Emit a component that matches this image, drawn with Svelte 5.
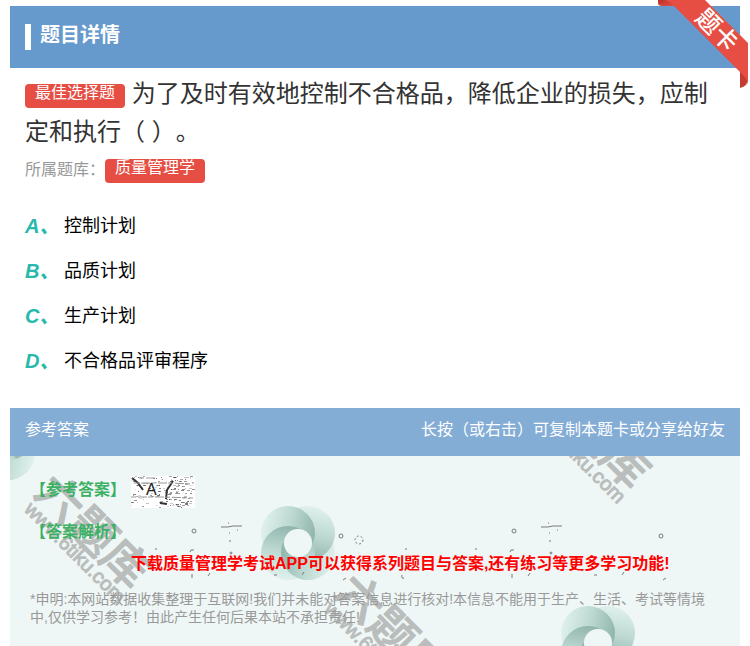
<script lang="ts">
	const options = [
		{ key: 'A', text: '控制计划' },
		{ key: 'B', text: '品质计划' },
		{ key: 'C', text: '生产计划' },
		{ key: 'D', text: '不合格品评审程序' },
	];

	// watermark tiles, offsets inside the answer panel
	const marks = [
		{ x: 0, y: 0 },
		{ x: 300, y: 100 },
		{ x: 500, y: -100 },
	];
	const swirls = [
		{ x: -12, y: -13 },
		{ x: 288, y: 87 },
		{ x: 588, y: 187 },
	];

	// speckles behind the answer letter
	let seed = 7;
	function rand() {
		seed = (seed * 16807) % 2147483647;
		return seed / 2147483647;
	}
	const specks = Array.from({ length: 170 }, () => ({
		x: Math.floor(rand() * 62),
		y: Math.floor(rand() * 32),
		w: 1 + Math.floor(rand() * 3),
		o: 0.1 + rand() * 0.45,
	}));
</script>

<main class="page">
	<header class="head">
		<h1>题目详情</h1>
	</header>
	<svg class="ribbon" width="92" height="90" viewBox="0 0 92 90">
		<defs>
			<linearGradient id="fold" x1="0" y1="0" x2="1" y2="1">
				<stop offset="0" stop-color="#b93228" />
				<stop offset="1" stop-color="#e64e44" />
			</linearGradient>
		</defs>
		<path d="M2 0V3Q2 6 6 6H20L12 0Z" fill="url(#fold)" />
		<path d="M84 70V88Q92 86 92 79V70Z" fill="#c43c32" />
		<path d="M7 0H49L92 43V85Q92 80 86 74L17 5Q12 0 7 0Z" fill="#e64e44" />
		<text x="61" y="30" transform="rotate(45 61 30)" text-anchor="middle" dominant-baseline="central">题卡</text>
	</svg>

	<section class="question">
		<h2><span class="badge">最佳选择题</span> 为了及时有效地控制不合格品，降低企业的损失，应制定和执行（ ）。</h2>
		<p class="bank">所属题库：<a class="badge" href="#bank">质量管理学</a></p>
		<ul>
			{#each options as opt}
				<li><em>{opt.key}、</em><span>{opt.text}</span></li>
			{/each}
		</ul>
	</section>

	<div class="bar">
		<span>参考答案</span>
		<span>长按（或右击）可复制本题卡或分享给好友</span>
	</div>

	<section class="answer">
		<svg class="backdrop" aria-hidden="true">
			<defs>
				<linearGradient id="shade" x1="0" y1="0.4" x2="1" y2="0.6">
					<stop offset="0" stop-color="#e0f1ed" />
					<stop offset="0.5" stop-color="#bdd9d2" />
					<stop offset="1" stop-color="#8fb4ab" />
				</linearGradient>
				<clipPath id="under">
					<path d="M-40 0H0V15Q10 18 18 15V40H-40Z" />
				</clipPath>
				<circle id="petal" cx="-10" cy="-10" r="27" fill="url(#shade)" />
				<g id="swirl">
					<use href="#petal" transform="rotate(180)" />
					<use href="#petal" transform="rotate(90)" />
					<use href="#petal" />
					<use href="#petal" transform="rotate(270)" />
					<g clip-path="url(#under)">
						<use href="#petal" transform="rotate(180)" />
					</g>
					<circle r="14" fill="#eff7f6" />
				</g>
				<pattern id="dust" width="320" height="130" patternUnits="userSpaceOnUse">
					<path d="M211 71h7l5-1h9M218 67h1M219 77h1M227 74h1M220 84v2M145 93h2M75 93h2M200 117l-2 3M264 119h3M294 116l-2 3M13 124l3-2M74 122q-3 1-2-3M182 118v4M184 94q-4-1-4 2" />
					<circle cx="184" cy="75" r="2" />
					<circle cx="221" cy="97" r="1" />
					<circle cx="11" cy="80" r="2" />
					<circle cx="29" cy="84" r="4" stroke-dasharray="2 2" />
				</pattern>
			</defs>
			{#each swirls as s}
				<use href="#swirl" x={s.x} y={s.y} />
			{/each}
			{#each marks as m}
				<g class="mark" transform="translate({m.x} {m.y}) rotate(45 50 40)">
					<text class="mark-name" x="29" y="58">六题库</text>
					<text class="mark-url" x="34" y="76">www.6tiku.com</text>
				</g>
			{/each}
			<rect x="140" width="520" height="130" fill="url(#dust)" />
		</svg>
		<dl>
			<dt>【参考答案】</dt>
			<dd class="key">
				<svg width="64" height="32" viewBox="0 0 64 32" aria-hidden="true">
					{#each specks as p}
						<rect x={p.x} y={p.y} width={p.w} height="1" opacity={p.o} />
					{/each}
					<path class="scratch" d="M1 2L7 7L12 14M42 5L36 14L35 23M29 27L36 28" />
					<path class="hair" d="M3 7H40L60 8M0 21H30L62 22M8 2H24" />
				</svg>
				<span>A</span>
			</dd>
			<dt>【答案解析】</dt>
			<dd class="promo">下载质量管理学考试APP可以获得系列题目与答案,还有练习等更多学习功能!</dd>
		</dl>
		<p class="note">*申明:本网站数据收集整理于互联网!我们并未能对答案信息进行核对!本信息不能用于生产、生活、考试等情境中,仅供学习参考！由此产生任何后果本站不承担责任!</p>
	</section>
</main>

<style>
	:global(body) {
		background: #fff;
		overflow: hidden;
	}
	.page {
		position: relative;
		padding: 6px 10px 0;
		font-family: 'Liberation Sans', 'Noto Sans CJK SC', sans-serif;
		font-size: 16px;
		text-spacing-trim: space-all;
	}
	h1, h2, p, ul, dl, dd {
		margin: 0;
		padding: 0;
	}
	.head {
		display: flex;
		align-items: center;
		height: 62px;
		padding: 0 15px;
		box-sizing: border-box;
		background: #6699cc;
	}
	h1 {
		height: 26px;
		padding-left: 9px;
		border-left: 6px solid #fff;
		color: #fff;
		font-size: 20px;
		line-height: 22px;
	}
	.ribbon {
		position: absolute;
		top: 0;
		right: 2px;
	}
	.ribbon text {
		fill: #fff;
		font-size: 24px;
		font-weight: 500;
	}
	.question {
		padding: 7px 15px 24px;
	}
	h2 {
		color: #333;
		font-size: 24px;
		font-weight: 400;
		line-height: 38px;
	}
	.badge {
		display: inline-block;
		height: 24px;
		padding: 0 10px;
		border-radius: 4px;
		background: #e64e44;
		color: #fff;
		font-size: 16px;
		line-height: 18px;
		text-decoration: none;
		vertical-align: middle;
	}
	.bank {
		color: #999;
		line-height: 38px;
	}
	ul {
		margin-top: 15px;
		list-style: none;
	}
	li {
		display: flex;
		color: #000;
		font-size: 18px;
		line-height: 45px;
	}
	em {
		width: 39px;
		color: #28b8ac;
		font-size: 20px;
		font-weight: 700;
	}
	.bar {
		display: flex;
		justify-content: space-between;
		padding: 0 15px 4px;
		background: #84add6;
		color: #fff;
		line-height: 44px;
	}
	.answer {
		position: relative;
		min-height: 190px;
		padding: 20px 20px 0;
		box-sizing: border-box;
		background: #eff7f6;
	}
	.backdrop {
		position: absolute;
		inset: 0;
		width: 100%;
		height: 100%;
		overflow: hidden;
	}
	#dust {
		fill: none;
		stroke: #777;
	}
	.mark {
		fill: #b9bdbc;
		stroke: #b9bdbc;
		stroke-linejoin: round;
	}
	.mark-name {
		font-size: 46px;
		font-weight: 500;
	}
	.mark-url {
		font-size: 20px;
	}
	dl {
		position: relative;
		display: grid;
		grid-template-columns: 101px 1fr;
		row-gap: 10px;
	}
	dt {
		color: #3cb164;
		font-weight: 700;
		line-height: 28px;
		white-space: nowrap;
	}
	.key {
		display: grid;
		width: 64px;
		height: 32px;
		background: #fff;
	}
	.key svg,
	.key span {
		grid-area: 1 / 1;
	}
	.scratch,
	.hair {
		fill: none;
		stroke: #333;
		stroke-width: 2;
	}
	.hair {
		stroke: #999;
		stroke-width: 1;
		stroke-dasharray: 5 2 9 1;
	}
	.key span {
		padding-left: 15px;
		color: #222;
		line-height: 28px;
	}
	.promo {
		padding-top: 32px;
		color: #f00;
		font-weight: 700;
		line-height: 28px;
	}
	.note {
		position: relative;
		margin-top: 12px;
		color: #999;
		font-size: 14px;
		line-height: 18px;
	}
</style>
